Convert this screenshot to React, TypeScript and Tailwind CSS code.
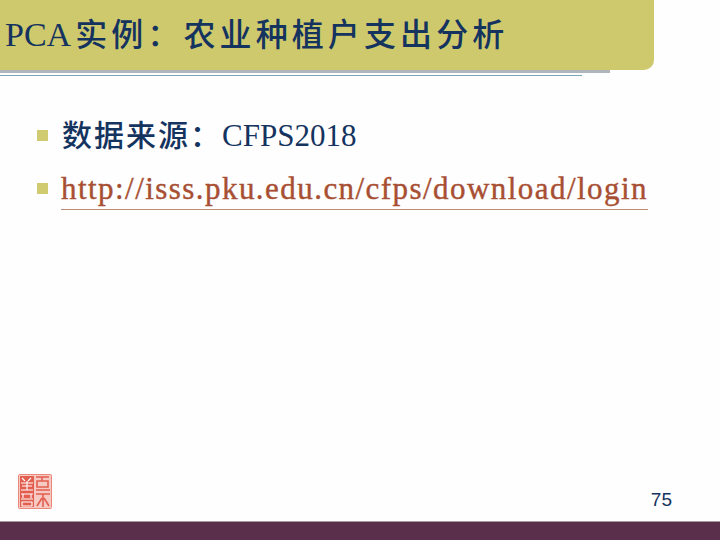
const serif = 'font-["Liberation_Serif","Noto_Sans_CJK_SC",serif]'

function Seal() {
  return (
    <svg width="34" height="35" viewBox="0 0 34 35" className="block">
      <rect x="0.5" y="0.5" width="33" height="34" rx="1" fill="#f6c9c2" stroke="#e9877b" />
      <rect x="2" y="2" width="14" height="31" fill="#e25f50" />
      <g stroke="#e25f50" strokeWidth="1.6" fill="none">
        <path d="M18 3h13M24 3v4M19 7h11v6H19zM18 16h14" />
        <path d="M18 20h14M25 20v13M19 32l5-8M31 32l-5-8" />
      </g>
      <g stroke="#fff" strokeWidth="1.1" fill="none">
        <path d="M4 4l3 3M13 4l-3 3M3 9h12M9 7v9M4 12h10M3 16h12" />
        <path d="M3 20h12M5 20v4M13 20v4M3 25h12M4 28h10v4H4z" />
      </g>
    </svg>
  )
}

export default function App() {
  return (
    <div className={`w-[720px] h-[540px] flex flex-col overflow-hidden bg-[#fefefe] ${serif}`}>
      <div className="w-[654px] h-[70px] shrink-0 flex items-center bg-[#cec96c] rounded-br-[10px] pl-[5px] pb-[1px]">
        <h1 className="text-[34px] leading-none text-[#14335f] whitespace-nowrap">
          PCA<span className="ml-[4px] text-[32px] font-medium tracking-[4.1px]">实例：农业种植户支出分析</span>
        </h1>
      </div>
      <div className="w-[610px] h-[3px] shrink-0 bg-[#b0b4bb]" />
      <div className="w-[582px] h-px shrink-0 mt-[2px] bg-[#7fa5b8]" />

      <ul className="mt-[40px] pl-[37px] flex flex-col gap-[14px]">
        <li className="h-[38px] flex items-center">
          <span className="w-[11px] h-[11px] shrink-0 mt-[1px] bg-[#d0cb70]" />
          <span className="ml-[14px] text-[31px] leading-none text-[#14335f] whitespace-nowrap">
            <span className="text-[30px] font-medium tracking-[2px]">数据来源：</span>CFPS2018
          </span>
        </li>
        <li className="h-[38px] flex items-center">
          <span className="w-[11px] h-[11px] shrink-0 mt-[3px] bg-[#d0cb70]" />
          <span className="ml-[13px] text-[31px] leading-[33px] pb-[4px] text-[#a84f33] whitespace-nowrap border-b border-[#c08a78] mt-[8px] tracking-[1.45px] [-webkit-text-stroke:0.4px_#a84f33]">
            http://isss.pku.edu.cn/cfps/download/login
          </span>
        </li>
      </ul>

      <div className="flex-1" />

      <div className="flex items-end justify-between pl-[18px] pr-[48px] pb-[12px]">
        <Seal />
        <span className="font-['Liberation_Sans',sans-serif] text-[19px] leading-none text-[#14335f]">75</span>
      </div>
      <div className="h-[19px] shrink-0 bg-[#5a2f4b] border-t border-[#a89aa3]" />
    </div>
  )
}
